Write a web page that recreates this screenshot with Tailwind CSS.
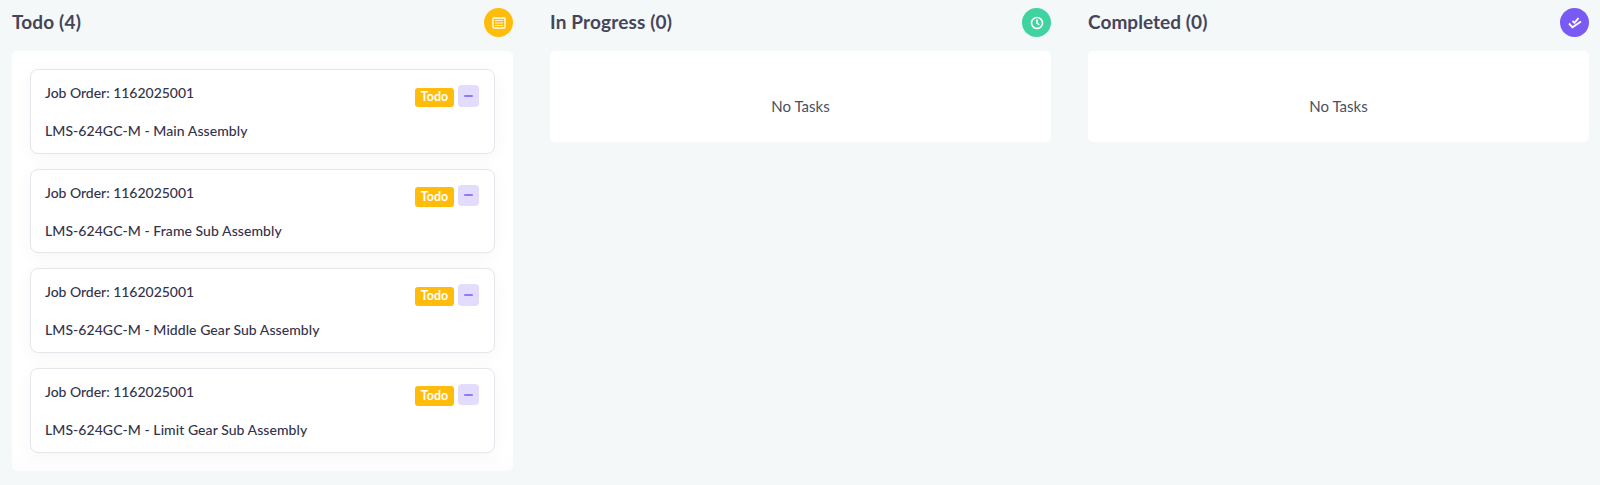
<!DOCTYPE html>
<html lang="en">
<head>
    <meta charset="UTF-8">
    <meta name="viewport" content="width=device-width, initial-scale=1.0">
    <title>Task Board</title>
    <script src="https://cdn.jsdelivr.net/npm/@tailwindcss/browser@4"></script>
</head>
<body class="bg-[#f4f8f9] font-['Lato',sans-serif] h-[485px] overflow-hidden">
    <div class="grid grid-cols-3 gap-x-[37px] pl-3 pr-[11px] pt-2">
        <!-- Todo -->
        <div>
            <div class="flex items-center justify-between h-[29px] mb-[14px]">
                <h2 class="text-[19px] tracking-[0.15px] font-bold text-[#45455a]">Todo (4)</h2>
                <span class="w-[29px] h-[29px] rounded-full bg-[#ffbc0a] flex items-center justify-center">
                    <svg width="14" height="12" viewBox="0 0 14 12" fill="none" stroke="#fff"><rect x="1" y="1" width="12" height="10" rx="0.8" stroke-width="1.3"/><path d="M3 3.5h8M3 6h8M3 8.5h8" stroke-width="1.1" stroke-opacity="0.8"/></svg>
                </span>
            </div>
            <div class="bg-white rounded-[5px] px-[18px] pt-[18px] h-[420px] flex flex-col gap-[15px] shadow-[inset_0_-20px_30px_-20px_rgba(0,0,0,0.02)]">
                <div class="h-[84.67px] shrink-0 border border-[#e4e6eb] rounded-[8px] pl-[14px] pr-[15px] pt-[14px] shadow-[0_4px_18px_rgba(0,0,0,0.04)] bg-white">
                    <div class="flex justify-between">
                        <p class="text-[14px] tracking-[-0.03px] leading-[18px] font-medium text-[#33334a]">Job Order: 1162025001</p>
                        <div class="flex items-start gap-1">
                            <span class="mt-[3.5px] h-[19.5px] w-[39px] rounded-[3px] bg-[#ffbc0a] text-white text-[12.5px] font-bold flex items-center justify-center">Todo</span>
                            <span class="mt-[1px] w-[21px] h-[21.5px] rounded-[4px] bg-[#e3dcfd] flex items-center justify-center"><span class="w-[9px] h-[2px] bg-[#8f7bf5] rounded"></span></span>
                        </div>
                    </div>
                    <p class="mt-[15px] text-[14px] tracking-[0.06px] leading-[18px] font-medium text-[#33334a]">LMS-624GC-M - Main Assembly</p>
                </div>
                <div class="h-[84.67px] shrink-0 border border-[#e4e6eb] rounded-[8px] pl-[14px] pr-[15px] pt-[14px] shadow-[0_4px_18px_rgba(0,0,0,0.04)] bg-white">
                    <div class="flex justify-between">
                        <p class="text-[14px] tracking-[-0.03px] leading-[18px] font-medium text-[#33334a]">Job Order: 1162025001</p>
                        <div class="flex items-start gap-1">
                            <span class="mt-[3.5px] h-[19.5px] w-[39px] rounded-[3px] bg-[#ffbc0a] text-white text-[12.5px] font-bold flex items-center justify-center">Todo</span>
                            <span class="mt-[1px] w-[21px] h-[21.5px] rounded-[4px] bg-[#e3dcfd] flex items-center justify-center"><span class="w-[9px] h-[2px] bg-[#8f7bf5] rounded"></span></span>
                        </div>
                    </div>
                    <p class="mt-[15px] text-[14px] tracking-[0.06px] leading-[18px] font-medium text-[#33334a]">LMS-624GC-M - Frame Sub Assembly</p>
                </div>
                <div class="h-[84.67px] shrink-0 border border-[#e4e6eb] rounded-[8px] pl-[14px] pr-[15px] pt-[14px] shadow-[0_4px_18px_rgba(0,0,0,0.04)] bg-white">
                    <div class="flex justify-between">
                        <p class="text-[14px] tracking-[-0.03px] leading-[18px] font-medium text-[#33334a]">Job Order: 1162025001</p>
                        <div class="flex items-start gap-1">
                            <span class="mt-[3.5px] h-[19.5px] w-[39px] rounded-[3px] bg-[#ffbc0a] text-white text-[12.5px] font-bold flex items-center justify-center">Todo</span>
                            <span class="mt-[1px] w-[21px] h-[21.5px] rounded-[4px] bg-[#e3dcfd] flex items-center justify-center"><span class="w-[9px] h-[2px] bg-[#8f7bf5] rounded"></span></span>
                        </div>
                    </div>
                    <p class="mt-[15px] text-[14px] tracking-[0.06px] leading-[18px] font-medium text-[#33334a]">LMS-624GC-M - Middle Gear Sub Assembly</p>
                </div>
                <div class="h-[84.67px] shrink-0 border border-[#e4e6eb] rounded-[8px] pl-[14px] pr-[15px] pt-[14px] shadow-[0_4px_18px_rgba(0,0,0,0.04)] bg-white">
                    <div class="flex justify-between">
                        <p class="text-[14px] tracking-[-0.03px] leading-[18px] font-medium text-[#33334a]">Job Order: 1162025001</p>
                        <div class="flex items-start gap-1">
                            <span class="mt-[3.5px] h-[19.5px] w-[39px] rounded-[3px] bg-[#ffbc0a] text-white text-[12.5px] font-bold flex items-center justify-center">Todo</span>
                            <span class="mt-[1px] w-[21px] h-[21.5px] rounded-[4px] bg-[#e3dcfd] flex items-center justify-center"><span class="w-[9px] h-[2px] bg-[#8f7bf5] rounded"></span></span>
                        </div>
                    </div>
                    <p class="mt-[15px] text-[14px] tracking-[0.06px] leading-[18px] font-medium text-[#33334a]">LMS-624GC-M - Limit Gear Sub Assembly</p>
                </div>
            </div>
        </div>
        <!-- In Progress -->
        <div>
            <div class="flex items-center justify-between h-[29px] mb-[14px]">
                <h2 class="text-[19px] tracking-[0.15px] font-bold text-[#45455a]">In Progress (0)</h2>
                <span class="w-[29px] h-[29px] rounded-full bg-[#41d39f] flex items-center justify-center">
                    <svg width="14" height="14" viewBox="0 0 14 14" fill="none" stroke="#fff" stroke-width="1.6" stroke-linecap="round" stroke-linejoin="round"><circle cx="7" cy="7" r="5.5"/><path d="M7 4v3.2l1.8 1.2"/></svg>
                </span>
            </div>
            <div class="bg-white rounded-[5px] h-[91px] flex items-center justify-center text-[15px] text-[#4a4f5c] pt-[20px]">No Tasks</div>
        </div>
        <!-- Completed -->
        <div>
            <div class="flex items-center justify-between h-[29px] mb-[14px]">
                <h2 class="text-[19px] tracking-[0.05px] font-bold text-[#45455a]">Completed (0)</h2>
                <span class="w-[29px] h-[29px] rounded-full bg-[#7a5af5] flex items-center justify-center">
                    <svg width="14" height="12" viewBox="0 0 14 12" fill="none" stroke="#fff" stroke-width="1.9"><path d="M4.5 3.8l2 2L10.5 1"/><path d="M1 6.5l3.5 3.8L13 4.5"/></svg>
                </span>
            </div>
            <div class="bg-white rounded-[5px] h-[91px] flex items-center justify-center text-[15px] text-[#4a4f5c] pt-[20px]">No Tasks</div>
        </div>
    </div>
</body>
</html>
